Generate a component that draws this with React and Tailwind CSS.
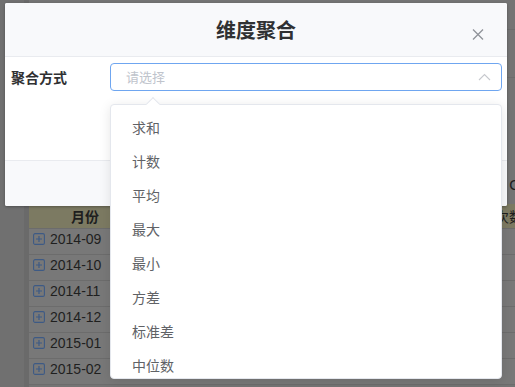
import React from "react";

const rows = ["2014-09", "2014-10", "2014-11", "2014-12", "2015-01", "2015-02"];
const options = ["求和", "计数", "平均", "最大", "最小", "方差", "标准差", "中位数"];

function PlusBox() {
  return (
    <svg width="12" height="12" viewBox="0 0 12 12" className="shrink-0">
      <rect x="0.6" y="0.6" width="10.8" height="10.8" rx="1.5" fill="none" stroke="#3d5a85" strokeWidth="1.1" />
      <path d="M3 6H9M6 3V9" stroke="#3d5a85" strokeWidth="1.2" />
    </svg>
  );
}

export default function App() {
  return (
    <div
      className="relative w-[515px] h-[387px] overflow-hidden bg-[#747474]"
      style={{ fontFamily: '"Liberation Sans", "Noto Sans CJK SC", sans-serif' }}
    >
      {/* background page */}
      <div className="flex h-full">
        <div className="w-[29px] shrink-0 bg-[#707070] border-r-[5px] border-[#6a6a6a]" />
        <div className="flex-1 flex flex-col">
          <div className="h-[30px] shrink-0 border-b border-[#6c6c6c]" />
          <div className="h-[48px] shrink-0 border-b border-[#6c6c6c]" />
          <div className="h-[126px] shrink-0 flex justify-end items-start pt-[98px] text-[15px] text-[#1e1e1e]">
            <span className="mr-[-6px] leading-[18px]">O</span>
          </div>
          <div className="h-[25px] shrink-0 bg-[#7c7a62] border-b border-[#6c6c6c] flex">
            <div
              className="w-[70px] text-right text-[14px] font-bold text-[#1e1e1e] leading-[24px]"
              style={{ fontFamily: '"Noto Sans CJK SC", sans-serif' }}
            >
              月份
            </div>
            <div
              className="flex-1 text-right text-[14px] text-[#1e1e1e] leading-[24px] mr-[-8px]"
              style={{ fontFamily: '"Noto Sans CJK SC", sans-serif' }}
            >
              次数
            </div>
          </div>
          {rows.map((r) => (
            <div
              key={r}
              className="h-[26px] shrink-0 border-b border-[#6c6c6c] bg-[#787878] flex items-center pb-[5px] pl-[4px] gap-[5px] text-[14px] leading-[16px] text-[#1f1f1f]"
            >
              <PlusBox />
              <span>{r}</span>
            </div>
          ))}
        </div>
      </div>

      {/* dialog */}
      <div
        className="absolute left-[5px] top-[3px] w-[502px] h-[203px] bg-white rounded-[2px] shadow-[0_1px_3px_rgba(0,0,0,0.3)] flex flex-col overflow-hidden"
        style={{ fontFamily: '"Noto Sans CJK SC", sans-serif' }}
      >
        <div className="h-[54px] shrink-0 bg-[#f8f9fb] border-b border-[#e9ebef] relative flex items-center justify-center">
          <span className="text-[20px] font-bold text-[#303133]">维度聚合</span>
          <svg className="absolute right-[23px] top-[26px]" width="12" height="11" viewBox="0 0 12 11">
            <path d="M1 0.5L11 10.5M11 0.5L1 10.5" stroke="#909399" strokeWidth="1.3" />
          </svg>
        </div>
        <div className="flex-1 flex items-start pt-[6px]">
          <div className="w-[105px] pl-[6px] text-[14px] font-bold text-[#303133] leading-[28px]">聚合方式</div>
          <div className="w-[392px] h-[28px] border border-[#6fa6f0] rounded-[4px] flex items-center justify-between pl-[15px] pr-[10px]">
            <span className="text-[13px] text-[#c0c4cc]">请选择</span>
            <svg width="13" height="8" viewBox="0 0 13 8">
              <path d="M1 7L6.5 1.5L12 7" fill="none" stroke="#c7c9ce" strokeWidth="1.1" />
            </svg>
          </div>
        </div>
        <div className="h-[46px] shrink-0 bg-[#f8f9fb] border-t border-[#e9ebef]" />
      </div>

      {/* dropdown */}
      <div
        className="absolute left-[110px] top-[104px] w-[392px] h-[275px] bg-white border border-[#e4e7ed] rounded-[4px] shadow-[0_2px_12px_rgba(0,0,0,0.1)]"
        style={{ fontFamily: '"Noto Sans CJK SC", sans-serif' }}
      >
        <div className="absolute left-[37px] top-[-6px] w-[10px] h-[10px] bg-white border-l border-t border-[#e4e7ed] rotate-45" />
        <div className="h-full overflow-hidden rounded-[4px] pt-[5px]">
          {options.map((o) => (
            <div key={o} className="h-[34px] leading-[34px] pl-[21px] text-[14px] text-[#606266]">
              {o}
            </div>
          ))}
        </div>
      </div>
    </div>
  );
}
